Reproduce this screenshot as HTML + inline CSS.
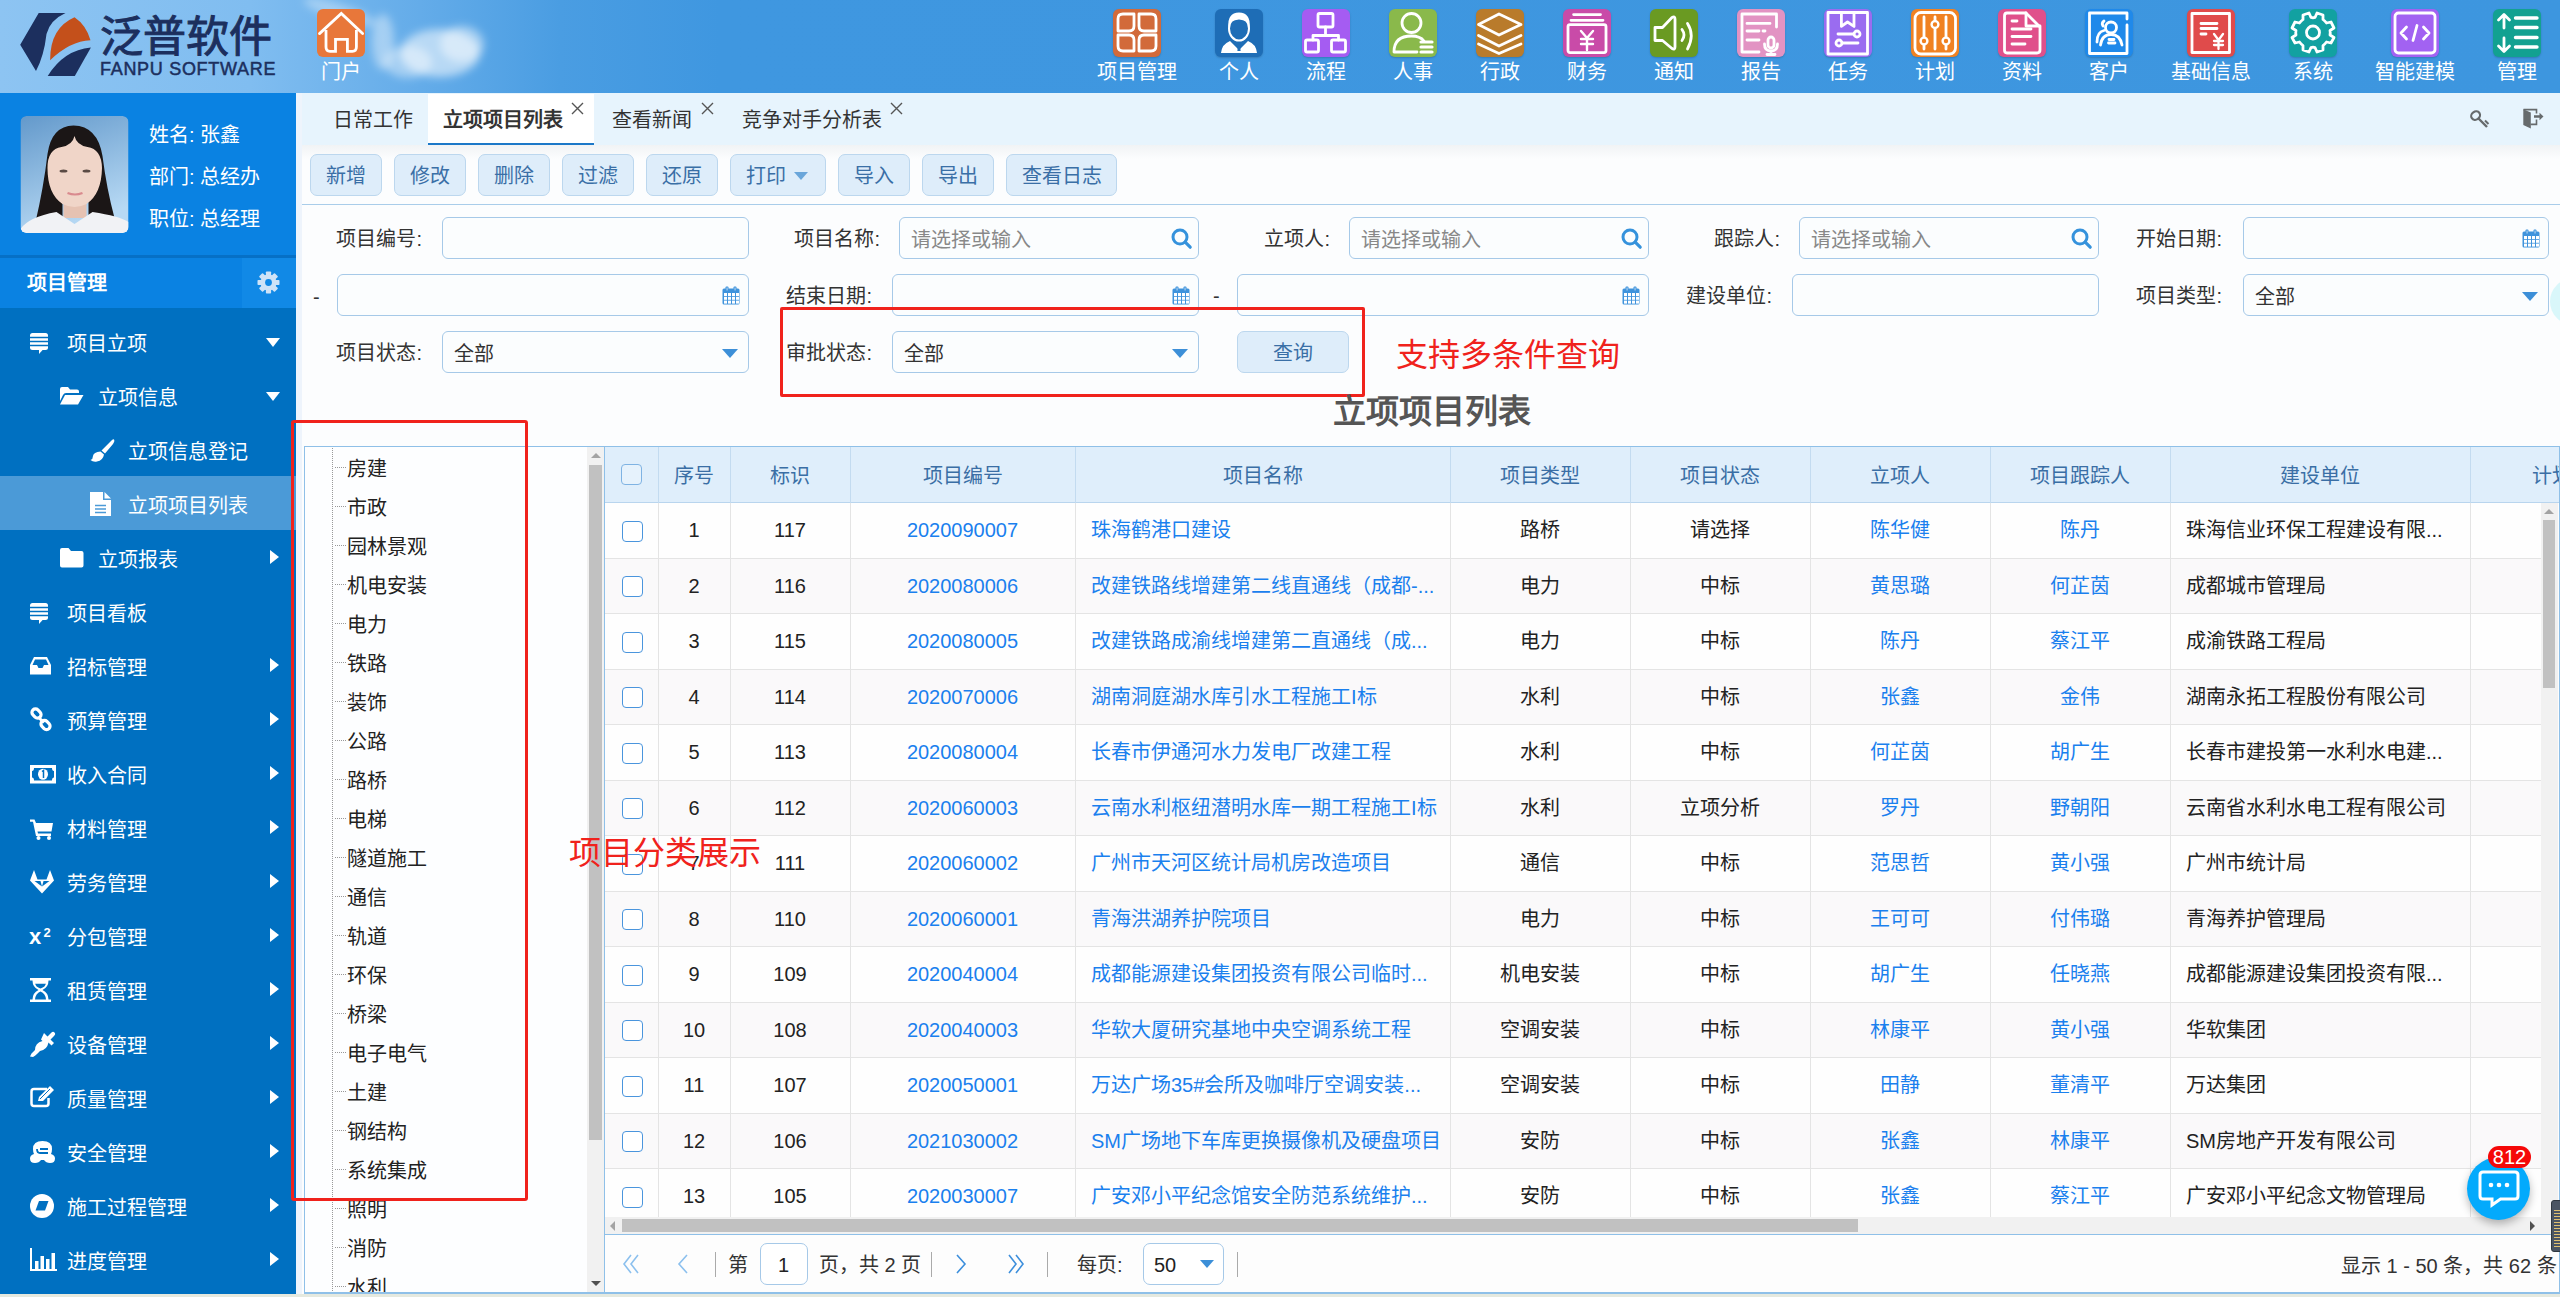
<!DOCTYPE html><html lang="zh-CN"><head><meta charset="utf-8"><style>
*{box-sizing:border-box;margin:0;padding:0}
html,body{width:2560px;height:1297px;overflow:hidden;background:#fcfdfe;font-family:"Liberation Sans",sans-serif;color:#333}
.abs{position:absolute}
.t{position:absolute;white-space:nowrap;line-height:1}
#hdr{position:absolute;left:0;top:0;width:2560px;height:93px;background:linear-gradient(90deg,#8dc4f2 0px,#80bdf0 250px,#64ace9 420px,#4a9de2 560px,#3f97e0 720px,#3d96df 2560px)}
.hi{position:absolute;top:9px;width:48px;height:48px;border-radius:6px}
.hl{position:absolute;top:62px;font-size:20px;color:#fff;white-space:nowrap;line-height:20px;text-align:center}
#side{position:absolute;left:0;top:93px;width:296px;height:1204px;background:#0070c1}
.mi{position:absolute;left:0;width:296px;height:54px;color:#fff;font-size:20px}
.mi .tx{position:absolute;top:19px;line-height:20px;white-space:nowrap}
.mi .ar{position:absolute;left:270px;top:20px;width:0;height:0;border-top:7px solid transparent;border-bottom:7px solid transparent;border-left:9px solid #fff}
.mi .ad{position:absolute;left:266px;top:24px;width:0;height:0;border-left:7px solid transparent;border-right:7px solid transparent;border-top:9px solid #fff}
.mi svg{position:absolute;overflow:visible}
.btn{position:absolute;top:154px;height:42px;border:1px solid #bcd7ee;border-radius:7px;background:#deedfa;color:#3a6fa6;font-size:20px;line-height:40px;text-align:center}
.lbl{position:absolute;font-size:20px;color:#333;white-space:nowrap;line-height:20px}
.inp{position:absolute;height:42px;border:1px solid #a6c9e8;border-radius:6px;background:#fbfdfe}
.ph{position:absolute;left:11px;top:11px;font-size:20px;line-height:20px;color:#888;white-space:nowrap}
.val{position:absolute;left:11px;top:11px;font-size:20px;line-height:20px;color:#333;white-space:nowrap}
.dd{position:absolute;right:10px;top:17px;width:0;height:0;border-left:8px solid transparent;border-right:8px solid transparent;border-top:9px solid #3c8fd8}
.tree .it{position:absolute;left:347px;font-size:20px;line-height:20px;color:#222;white-space:nowrap}
.tree .hd{position:absolute;left:335px;width:12px;height:1px;background:repeating-linear-gradient(90deg,#999 0 1px,transparent 1px 2px)}
.gh{position:absolute;top:447px;height:56px;font-size:20px;line-height:56px;color:#3a6ea5;text-align:center;white-space:nowrap}
.cell{position:absolute;font-size:20px;line-height:20px;white-space:nowrap;text-align:center}
.lnk{color:#1a80ee}
.t,.lbl,.ph,.val,.tree .it,.mi .tx,.gh{transform:translateY(1px)}
.btn{padding-top:1px}
.cb{position:absolute;width:21px;height:21px;border:1.6px solid #4a95dd;border-radius:4px;background:#fff}
.vl{position:absolute;width:1px;background:#e3e3e3}
.hlz{position:absolute;height:1px;background:#e3e3e3}
</style></head><body>
<div id="hdr">
<svg class="abs" style="left:280px;top:0" width="230" height="93" viewBox="280 0 230 93"><defs><filter id="bl" x="-50%" y="-50%" width="200%" height="200%"><feGaussianBlur stdDeviation="4"/></filter></defs>
<g filter="url(#bl)" fill="#fff">
<ellipse cx="440" cy="53" rx="40" ry="24" opacity=".55"/>
<ellipse cx="462" cy="44" rx="22" ry="18" opacity=".45"/>
<ellipse cx="408" cy="62" rx="24" ry="16" opacity=".4"/>
<ellipse cx="383" cy="42" rx="11" ry="28" opacity=".4"/>
<ellipse cx="340" cy="12" rx="38" ry="8" opacity=".35" transform="rotate(18 340 12)"/>
</g></svg>
<svg class="abs" style="left:0;top:0" width="100" height="90" viewBox="0 0 100 90">
<path d="M38.7 13 L65.5 13 Q50 20 46.5 34 Q44 56 36 71 L20.2 44.8 Z" fill="#1c2f5e"/>
<path d="M74.5 17.3 Q86 25 90.5 40.2 Q70 41 50.1 60.2 Q50 28 74.5 17.3 Z" fill="#c4501b"/>
<path d="M90.9 47.6 L74.8 76 L47.7 76 Q64 50 90.9 47.6 Z" fill="#1c2f5e"/>
</svg>
<div class="t" style="left:100px;top:14.5px;font-size:43px;font-weight:normal;color:#1c2f5e;-webkit-text-stroke:1px #1c2f5e">泛普软件</div>
<div class="t" style="left:100px;top:59px;font-size:18px;font-weight:normal;color:#1c2f5e;letter-spacing:0.7px;-webkit-text-stroke:0.5px #1c2f5e">FANPU SOFTWARE</div>
<div class="hi" style="left:317px;background:#e8773a"></div>
<svg class="abs" style="left:317px;top:9px" width="48" height="47" viewBox="0 0 48 47"><path d="M2.5 24.6L24.3 4.5L45.6 24.6" fill="none" stroke="#fff" stroke-width="2.8" stroke-linecap="round"/><path d="M9 21V38Q9 42.3 13 42.3H18.5V30.4H30.4V42.3H35.4Q39.4 42.3 39.4 38V21" fill="none" stroke="#fff" stroke-width="2.8"/></svg>
<div class="hl" style="left:321px;width:40px">门户</div>
<div class="hi" style="left:1113px;background:#d26a3a;box-shadow:0 1px 2px rgba(0,0,0,.18)"></div>
<svg class="abs" style="left:1113px;top:9px" width="48" height="47" viewBox="0 0 48 47"><g fill="none" stroke="#fff" stroke-width="2.8" stroke-linecap="round" stroke-linejoin="round"><path d="M5 10Q5 5 10 5H21V17Q21 22 16 22H5Z"/><path d="M43 10Q43 5 38 5H26V17Q26 22 31 22H43Z" transform="translate(0 0)"/><path d="M5 37Q5 42 10 42H21V31Q21 26 16 26H5Z"/><path d="M43 37Q43 42 38 42H26V31Q26 26 31 26H43Z"/></g></svg>
<div class="hl" style="left:1097px;width:80px">项目管理</div>
<div class="hi" style="left:1215px;background:#1e6db6;box-shadow:0 1px 2px rgba(0,0,0,.18)"></div>
<svg class="abs" style="left:1215px;top:9px" width="48" height="47" viewBox="0 0 48 47"><path d="M13.5 18Q12 4 24 3.5Q36 4 34.5 18Q33 11 24 10.5Q15 11 13.5 18Z" fill="#fff"/><ellipse cx="24" cy="19.5" rx="10" ry="12" fill="none" stroke="#fff" stroke-width="2"/><path d="M6 44Q7 35 15 32L24 41L33 32Q41 35 42 44Z" fill="#fff"/><path d="M23.2 34H24.8L25.6 42H22.4Z" fill="#1e6db6"/></svg>
<div class="hl" style="left:1219px;width:40px">个人</div>
<div class="hi" style="left:1302px;background:#a55cf2;box-shadow:0 1px 2px rgba(0,0,0,.18)"></div>
<svg class="abs" style="left:1302px;top:9px" width="48" height="47" viewBox="0 0 48 47"><g fill="none" stroke="#fff" stroke-width="2.8" stroke-linecap="round" stroke-linejoin="round"><rect x="16" y="4.5" width="15" height="13.5" rx="1.5"/><path d="M23.5 18V26.5M11 31V26.5H36.5V31"/><rect x="3.5" y="31" width="13" height="12" rx="1.5"/><rect x="29.5" y="31" width="14" height="12" rx="1.5"/></g></svg>
<div class="hl" style="left:1306px;width:40px">流程</div>
<div class="hi" style="left:1389px;background:#8ab94b;box-shadow:0 1px 2px rgba(0,0,0,.18)"></div>
<svg class="abs" style="left:1389px;top:9px" width="48" height="47" viewBox="0 0 48 47"><g fill="none" stroke="#fff" stroke-width="2.8" stroke-linecap="round" stroke-linejoin="round"><circle cx="22.5" cy="14" r="9.5"/><path d="M5 43Q5 27 22.5 27Q31 27 35 32M5 43H28"/><path d="M32 33H43M32 38H43M32 43H43" stroke-width="3.2"/></g></svg>
<div class="hl" style="left:1393px;width:40px">人事</div>
<div class="hi" style="left:1476px;background:#b97b2b;box-shadow:0 1px 2px rgba(0,0,0,.18)"></div>
<svg class="abs" style="left:1476px;top:9px" width="48" height="47" viewBox="0 0 48 47"><g fill="none" stroke="#fff" stroke-width="2.8" stroke-linecap="round" stroke-linejoin="round" stroke-width="2.4"><path d="M2.5 15.6L23 5L45 15.6L23 26Z"/><path d="M2.5 26.5L23 37L45 26.5"/><path d="M2.5 35L23 44.5L45 35"/></g></svg>
<div class="hl" style="left:1480px;width:40px">行政</div>
<div class="hi" style="left:1563px;background:#c94ba8;box-shadow:0 1px 2px rgba(0,0,0,.18)"></div>
<svg class="abs" style="left:1563px;top:9px" width="48" height="47" viewBox="0 0 48 47"><g fill="none" stroke="#fff" stroke-width="2.8" stroke-linecap="round" stroke-linejoin="round"><path d="M10.6 5.6H37.5M8 11.3H40"/><rect x="5" y="15.6" width="38" height="28" rx="2"/><path d="M18 22L24 29L30 22M24 29V41M18 30H30M18 35H30" stroke-width="2.4"/></g></svg>
<div class="hl" style="left:1567px;width:40px">财务</div>
<div class="hi" style="left:1650px;background:#6a9a22;box-shadow:0 1px 2px rgba(0,0,0,.18)"></div>
<svg class="abs" style="left:1650px;top:9px" width="48" height="47" viewBox="0 0 48 47"><g fill="none" stroke="#fff" stroke-width="2.8" stroke-linecap="round" stroke-linejoin="round"><path d="M5 18.5H12.5L22 8.5Q25 7 25 10V38Q25 41 22 39.5L12.5 31.5H5Z"/><path d="M32 20.5Q36 26 32 31.5M37.5 14.5Q45 26 37.5 40"/></g></svg>
<div class="hl" style="left:1654px;width:40px">通知</div>
<div class="hi" style="left:1737px;background:#e293c3;box-shadow:0 1px 2px rgba(0,0,0,.18)"></div>
<svg class="abs" style="left:1737px;top:9px" width="48" height="47" viewBox="0 0 48 47"><g fill="none" stroke="#fff" stroke-width="2.8" stroke-linecap="round" stroke-linejoin="round"><path d="M39.5 18V5H5V43H22"/><path d="M10 14.4H33M10 22H22M26 22H28M10 31H22"/><rect x="31" y="28" width="6" height="11" rx="3"/><path d="M27.5 35Q27.5 42 34 42Q40.5 42 40.5 35M34 42V45.5M30 45.5H38"/></g></svg>
<div class="hl" style="left:1741px;width:40px">报告</div>
<div class="hi" style="left:1824px;background:#9a6cf0;box-shadow:0 1px 2px rgba(0,0,0,.18)"></div>
<svg class="abs" style="left:1824px;top:9px" width="48" height="47" viewBox="0 0 48 47"><g fill="none" stroke="#fff" stroke-width="2.8" stroke-linecap="round" stroke-linejoin="round"><rect x="4" y="3.5" width="39.5" height="41.5"/><path d="M17.4 4V17.4L23.5 13L30 17.4V4"/><path d="M14 25H30M18 34H34"/><circle cx="33" cy="25" r="3"/><circle cx="15" cy="34" r="3"/></g></svg>
<div class="hl" style="left:1828px;width:40px">任务</div>
<div class="hi" style="left:1911px;background:#f08222;box-shadow:0 1px 2px rgba(0,0,0,.18)"></div>
<svg class="abs" style="left:1911px;top:9px" width="48" height="47" viewBox="0 0 48 47"><g fill="none" stroke="#fff" stroke-width="2.8" stroke-linecap="round"><rect x="4" y="3.5" width="40.5" height="41.5" rx="6"/><path d="M13 8V40M24 8V40M35 8V40"/></g><g fill="#f08222" stroke="#fff" stroke-width="2.4"><circle cx="13" cy="32" r="3.4"/><circle cx="24" cy="15.5" r="3.4"/><circle cx="35" cy="32" r="3.4"/></g></svg>
<div class="hl" style="left:1915px;width:40px">计划</div>
<div class="hi" style="left:1998px;background:#e0508b;box-shadow:0 1px 2px rgba(0,0,0,.18)"></div>
<svg class="abs" style="left:1998px;top:9px" width="48" height="47" viewBox="0 0 48 47"><g fill="none" stroke="#fff" stroke-width="2.8" stroke-linecap="round" stroke-linejoin="round"><path d="M9 4H28L42 18V41Q42 44 39 44H9Q6.5 44 6.5 41V7Q6.5 4 9 4Z"/><path d="M28 4V17H42"/><path d="M14 12H19M14 20H33M14 27.5H33M14 35H27"/></g></svg>
<div class="hl" style="left:2002px;width:40px">资料</div>
<div class="hi" style="left:2085px;background:#1f89ea;box-shadow:0 1px 2px rgba(0,0,0,.18)"></div>
<svg class="abs" style="left:2085px;top:9px" width="48" height="47" viewBox="0 0 48 47"><g fill="none" stroke="#fff" stroke-width="2.8" stroke-linecap="round" stroke-linejoin="round"><path d="M42 10V4H4.5V44.5H42V16"/><circle cx="26" cy="18.5" r="5.5"/><path d="M15.5 36Q17 25.5 26 25.5Q35 25.5 37 36M12 33Q12 23 19 21.5M18 17Q16 14 19 12M24 30.5H29M23.5 34H30"/></g></svg>
<div class="hl" style="left:2089px;width:40px">客户</div>
<div class="hi" style="left:2187px;background:#e04b4b;box-shadow:0 1px 2px rgba(0,0,0,.18)"></div>
<svg class="abs" style="left:2187px;top:9px" width="48" height="47" viewBox="0 0 48 47"><g fill="none" stroke="#fff" stroke-width="2.8" stroke-linecap="round" stroke-linejoin="round"><rect x="5" y="4.5" width="37.5" height="39"/><path d="M14 14.5H30M14 19.5H30M14 25H19"/><path d="M27 25L31.5 31L36 25M31.5 31V40M27 32H36M27 36H36" stroke-width="2.3"/></g></svg>
<div class="hl" style="left:2171px;width:80px">基础信息</div>
<div class="hi" style="left:2289px;background:#12a1a1;box-shadow:0 1px 2px rgba(0,0,0,.18)"></div>
<svg class="abs" style="left:2289px;top:9px" width="48" height="47" viewBox="0 0 48 47"><g fill="none" stroke="#fff" stroke-width="2.8" stroke-linecap="round" stroke-linejoin="round" stroke-width="2.6"><path d="M20 4L22 8.5Q24 9 26 8.5L28 4L34 6L34 10.5Q36 12 37.5 14L42 13L45 19L41 21.5Q41.5 23.5 41 26L45 28.5L42 34L37.5 33Q36 35 34 36.5L34 41L28 43L26 38.5Q24 38 22 38.5L20 43L14 41L14 36.5Q12 35 10.5 33L6 34L3 28.5L7 26Q6.5 23.5 7 21.5L3 19L6 13L10.5 14Q12 12 14 10.5L14 6Z"/><circle cx="24" cy="23.5" r="6.5"/></g></svg>
<div class="hl" style="left:2293px;width:40px">系统</div>
<div class="hi" style="left:2391px;background:#a262f2;box-shadow:0 1px 2px rgba(0,0,0,.18)"></div>
<svg class="abs" style="left:2391px;top:9px" width="48" height="47" viewBox="0 0 48 47"><g fill="none" stroke="#fff" stroke-width="2.8" stroke-linecap="round" stroke-linejoin="round"><rect x="4" y="4" width="40" height="40" rx="3.5"/><path d="M15.5 18L10 24L15.5 30M32.5 18L38 24L32.5 30M26 16.5L22 31.5"/></g></svg>
<div class="hl" style="left:2375px;width:80px">智能建模</div>
<div class="hi" style="left:2493px;background:#12a191;box-shadow:0 1px 2px rgba(0,0,0,.18)"></div>
<svg class="abs" style="left:2493px;top:9px" width="48" height="47" viewBox="0 0 48 47"><g fill="none" stroke="#fff" stroke-width="2.8" stroke-linecap="round" stroke-linejoin="round" stroke-width="3"><path d="M11 19V6M5.5 11L11 5.5L16.5 11M11 29V42M5.5 37L11 42.5L16.5 37"/><path d="M22.5 9H44M22.5 18.5H44M22.5 28.5H44M22.5 38H44" stroke-width="3.4"/></g></svg>
<div class="hl" style="left:2497px;width:40px">管理</div>
</div>
<div id="side">
<div class="abs" style="left:0;top:0;width:296px;height:162px;background:#0a82e2"></div>
<div class="abs" style="left:0;top:162px;width:296px;height:3px;background:#0670c6"></div>
<div class="abs" style="left:0;top:165px;width:296px;height:50px;background:#0a82e2"></div>
<div class="abs" style="left:242px;top:165px;width:54px;height:50px;background:#1189e6"></div>
<svg class="abs" style="left:20px;top:23px;border-radius:6px" width="109" height="117" viewBox="0 0 108 117">
<defs><linearGradient id="pbg" x1="0" y1="0" x2="0.35" y2="1"><stop offset="0" stop-color="#6399cb"/><stop offset="1" stop-color="#b7d9f4"/></linearGradient>
<clipPath id="pc"><rect width="108" height="117" rx="6"/></clipPath></defs>
<g clip-path="url(#pc)">
<rect width="108" height="117" fill="url(#pbg)"/>
<path d="M53 9.5Q31 10 27 38Q23 72 15 106H42V62H68V102H94Q86 72 82 40Q77 10 53 9.5Z" fill="#1b1616"/>
<rect x="43" y="78" width="23" height="24" fill="#e6c2b2"/>
<path d="M27 52Q27 33 41 31Q52 29 54 20Q56 29 67 31Q81 33 81.5 52Q81 78 66 88Q54 94 42 88Q27 78 27 52Z" fill="#f0d5c8"/>
<ellipse cx="43" cy="55" rx="4" ry="1.6" fill="#5a4a44"/><ellipse cx="66" cy="55" rx="4" ry="1.6" fill="#5a4a44"/>
<path d="M47 77Q54.5 80 62 77" stroke="#d98a8e" stroke-width="2.2" fill="none"/>
<path d="M0 113Q8 101 36 96L54 108L72 96Q99 100 108 106V117H0Z" fill="#f1f2f5"/>
</g></svg>
<div class="t" style="left:149px;top:31px;font-size:20px;color:#fff">姓名: 张鑫</div>
<div class="t" style="left:149px;top:73px;font-size:20px;color:#fff">部门: 总经办</div>
<div class="t" style="left:149px;top:115px;font-size:20px;color:#fff">职位: 总经理</div>
<div class="t" style="left:27px;top:179px;font-size:20px;color:#fff;font-weight:bold">项目管理</div>
<svg class="abs" style="left:257px;top:178px" width="23" height="23" viewBox="-11.5 -11.5 23 23"><g fill="#cfe3f7"><rect x="-2.6" y="-11" width="5.2" height="5" rx="0.8" transform="rotate(0)"/><rect x="-2.6" y="-11" width="5.2" height="5" rx="0.8" transform="rotate(45)"/><rect x="-2.6" y="-11" width="5.2" height="5" rx="0.8" transform="rotate(90)"/><rect x="-2.6" y="-11" width="5.2" height="5" rx="0.8" transform="rotate(135)"/><rect x="-2.6" y="-11" width="5.2" height="5" rx="0.8" transform="rotate(180)"/><rect x="-2.6" y="-11" width="5.2" height="5" rx="0.8" transform="rotate(225)"/><rect x="-2.6" y="-11" width="5.2" height="5" rx="0.8" transform="rotate(270)"/><rect x="-2.6" y="-11" width="5.2" height="5" rx="0.8" transform="rotate(315)"/><circle r="8"/></g><circle r="3.4" fill="#1189e6"/></svg>
</div>
<div class="mi" style="top:314px;"><div class="tx" style="left:67px">项目立项</div>
<svg style="left:30px;top:19px" width="18" height="21" viewBox="0 0 18 21"><rect x="0" y="0" width="18" height="17" rx="2.5" fill="#fff"/><path d="M0 4.5H18M0 8.5H18M0 12.5H18" stroke="#0070c1" stroke-width="1.3"/><path d="M9 16.5L9 21L13 16.5Z" fill="#fff"/></svg>
<div class="ad"></div>
</div>
<div class="mi" style="top:368px;"><div class="tx" style="left:98px">立项信息</div>
<svg style="left:60px;top:19px" width="24" height="18" viewBox="0 0 24 18"><path d="M0 2Q0 0 2 0H8L10 2.5H17Q19 2.5 19 4.5V6H6Q4 6 3 8L0 14Z" fill="#fff"/><path d="M5 8H23.5L18 17.5H0Z" fill="#fff"/></svg>
<div class="ad"></div>
</div>
<div class="mi" style="top:422px;"><div class="tx" style="left:128px">立项信息登记</div>
<svg style="left:90px;top:16px" width="25" height="25" viewBox="0 0 25 25"><path d="M24 1.5Q25 3 23 6L15 15.5L11.5 12.5L21 3Q23 0.5 24 1.5Z" fill="#fff"/><path d="M10.5 13.5L14 16.5Q13 22.5 7 23.5Q3 24.2 0.5 22Q3 21 3 18Q3.5 14 10.5 13.5Z" fill="#fff"/></svg>
</div>
<div class="mi" style="top:476px;background:#4b9ad7;"><div class="tx" style="left:128px">立项项目列表</div>
<svg style="left:90px;top:16px" width="22" height="25" viewBox="0 0 22 25"><path d="M0 0H13V8H21V24H0Z" fill="#fff"/><path d="M14.5 0L21 6.5H14.5Z" fill="#fff"/><path d="M5 13.5H16M5 17H16M5 20.5H16" stroke="#4b9ad7" stroke-width="1.4"/></svg>
</div>
<div class="mi" style="top:530px;"><div class="tx" style="left:98px">立项报表</div>
<svg style="left:60px;top:18px" width="24" height="20" viewBox="0 0 24 20"><path d="M0 2Q0 0 2 0H8.5L11 3H21.5Q23.5 3 23.5 5V17.5Q23.5 19.5 21.5 19.5H2Q0 19.5 0 17.5Z" fill="#fff"/></svg>
<div class="ar"></div>
</div>
<div class="mi" style="top:584px;"><div class="tx" style="left:67px">项目看板</div>
<svg style="left:30px;top:19px" width="18" height="21" viewBox="0 0 18 21"><rect x="0" y="0" width="18" height="17" rx="2.5" fill="#fff"/><path d="M0 4.5H18M0 8.5H18M0 12.5H18" stroke="#0070c1" stroke-width="1.3"/><path d="M9 16.5L9 21L13 16.5Z" fill="#fff"/></svg>
</div>
<div class="mi" style="top:638px;"><div class="tx" style="left:67px">招标管理</div>
<svg style="left:30px;top:19px" width="22" height="18" viewBox="0 0 22 18"><path d="M4 0H17L21 8V17.5H0V8Z" fill="#fff"/><path d="M5 2.5H16L18.5 8H14L12.5 11H8.5L7 8H2.5Z" fill="#0070c1"/></svg>
<div class="ar"></div>
</div>
<div class="mi" style="top:692px;"><div class="tx" style="left:67px">预算管理</div>
<svg style="left:30px;top:16px" width="22" height="23" viewBox="0 0 22 23"><g fill="none" stroke="#fff" stroke-width="3.2"><rect x="1.5" y="2" width="10" height="7" rx="3.5" transform="rotate(45 6.5 5.5)"/><rect x="10.5" y="13.5" width="10" height="7" rx="3.5" transform="rotate(45 15.5 17)"/></g><path d="M8 9L14 14.5" stroke="#fff" stroke-width="3"/></svg>
<div class="ar"></div>
</div>
<div class="mi" style="top:746px;"><div class="tx" style="left:67px">收入合同</div>
<svg style="left:30px;top:19px" width="26" height="19" viewBox="0 0 26 19"><rect x="0" y="0" width="26" height="18.5" fill="#fff"/><path d="M4 3H22Q22 6 24 6V12.5Q22 12.5 22 15.5H4Q4 12.5 2 12.5V6Q4 6 4 3Z" fill="#0070c1"/><ellipse cx="13" cy="9.25" rx="5" ry="5.5" fill="#fff"/><path d="M12 6.5L13.5 5.5V13" stroke="#0070c1" stroke-width="1.5" fill="none"/></svg>
<div class="ar"></div>
</div>
<div class="mi" style="top:800px;"><div class="tx" style="left:67px">材料管理</div>
<svg style="left:30px;top:19px" width="24" height="21" viewBox="0 0 24 21"><path d="M0 0.5H4.5L6 4H23L21.5 12.5H7.5L8 14.5H21V17H6L3 2.8H0Z" fill="#fff"/><circle cx="8.5" cy="19" r="2" fill="#fff"/><circle cx="19" cy="19" r="2" fill="#fff"/></svg>
<div class="ar"></div>
</div>
<div class="mi" style="top:854px;"><div class="tx" style="left:67px">劳务管理</div>
<svg style="left:30px;top:16px" width="25" height="24" viewBox="0 0 25 24"><path d="M0 10.5L4 0L7.5 9.5H16.5L20 0L24 10.5L12 23.5Z" fill="#fff"/><path d="M4.5 11H10.5L12 16.5Z" fill="#0070c1"/><path d="M13.5 11H19.5L12 16.5Z" fill="#0070c1" transform="translate(0 0)"/></svg>
<div class="ar"></div>
</div>
<div class="mi" style="top:908px;"><div class="tx" style="left:67px">分包管理</div>
<svg style="left:29px;top:18px" width="24" height="19" viewBox="0 0 24 19"><text x="0" y="18" font-family="Liberation Sans" font-weight="bold" font-size="22" fill="#fff">x</text><text x="14.5" y="10.5" font-family="Liberation Sans" font-weight="bold" font-size="13" fill="#fff">2</text></svg>
<div class="ar"></div>
</div>
<div class="mi" style="top:962px;"><div class="tx" style="left:67px">租赁管理</div>
<svg style="left:30px;top:16px" width="21" height="24" viewBox="0 0 21 24"><path d="M0 0H21V2.5H18.5Q18.5 9 12.5 12Q18.5 15 18.5 21.5H21V24H0V21.5H2.5Q2.5 15 8.5 12Q2.5 9 2.5 2.5H0Z" fill="#fff"/><path d="M5 5H16Q15.5 9 10.5 10.5Q5.5 9 5 5ZM5 21.5Q5.5 15.5 10.5 13.5Q15.5 15.5 16 21.5Z" fill="#0070c1"/><path d="M5 5H16" stroke="#fff" stroke-width="1.5"/></svg>
<div class="ar"></div>
</div>
<div class="mi" style="top:1016px;"><div class="tx" style="left:67px">设备管理</div>
<svg style="left:30px;top:15px" width="25" height="26" viewBox="0 0 25 26"><path d="M14 2L17.5 5.5L21 2Q23 0 24.5 1.5Q26 3 24 5L20.5 8.5L24 12L21.5 14.5L18.5 11.5Q17 19 10 20L7 23Q5 25 3 26L0 25.5L1.5 22.5L5 19Q5 12 12.5 10L11 8.5Z" fill="#fff"/></svg>
<div class="ar"></div>
</div>
<div class="mi" style="top:1070px;"><div class="tx" style="left:67px">质量管理</div>
<svg style="left:30px;top:16px" width="25" height="21" viewBox="0 0 25 21"><path d="M17 3H4Q1.5 3 1.5 5.5V17.5Q1.5 20 4 20H16Q18.5 20 18.5 17.5V12" fill="none" stroke="#fff" stroke-width="2.5"/><path d="M8 15L9 11L20 0L24 4L13 15Z" fill="#fff"/><path d="M10 13L20 3" stroke="#0070c1" stroke-width="1"/></svg>
<div class="ar"></div>
</div>
<div class="mi" style="top:1124px;"><div class="tx" style="left:67px">安全管理</div>
<svg style="left:30px;top:17px" width="25" height="22" viewBox="0 0 25 22"><path d="M12.5 0Q22 0 22 8Q22 11 21 13Q25 14 25 17.5Q25 22 20 22Q16 22 14 19H11Q9 22 5 22Q0 22 0 17.5Q0 14 4 13Q3 11 3 8Q3 0 12.5 0Z" fill="#fff"/><path d="M7 8Q7 12 10 12H18M10 8H18" stroke="#0070c1" stroke-width="1.8" fill="none"/></svg>
<div class="ar"></div>
</div>
<div class="mi" style="top:1178px;"><div class="tx" style="left:67px">施工过程管理</div>
<svg style="left:30px;top:16px" width="24" height="24" viewBox="0 0 24 24"><circle cx="12" cy="12" r="12" fill="#fff"/><path d="M9 7H18.5L15 16.5H5.5Z" fill="#0070c1"/></svg>
<div class="ar"></div>
</div>
<div class="mi" style="top:1232px;"><div class="tx" style="left:67px">进度管理</div>
<svg style="left:30px;top:16px" width="27" height="23" viewBox="0 0 27 23"><path d="M1 0V22H27" fill="none" stroke="#fff" stroke-width="2"/><rect x="5" y="13" width="3.5" height="8" fill="#fff"/><rect x="10.5" y="8" width="3.5" height="13" fill="#fff"/><rect x="16" y="11" width="3.5" height="10" fill="#fff"/><rect x="21.5" y="5" width="3.5" height="16" fill="#fff"/></svg>
<div class="ar"></div>
</div>
<div class="abs" style="left:296px;top:93px;width:6px;height:1204px;background:#eef4fc"></div>
<div class="abs" style="left:302px;top:93px;width:2258px;height:52px;background:#e7f4fd"></div>
<div class="abs" style="left:428px;top:94px;width:166px;height:51px;background:#fff;border-bottom:2px solid #1c78c8"></div>
<div class="t" style="left:333px;top:109px;font-size:20px;color:#333">日常工作</div>
<div class="t" style="left:443px;top:109px;font-size:20px;color:#333;font-weight:bold">立项项目列表</div>
<div class="t" style="left:612px;top:109px;font-size:20px;color:#333">查看新闻</div>
<div class="t" style="left:742px;top:109px;font-size:20px;color:#333">竞争对手分析表</div>
<svg class="abs" style="left:571px;top:102px" width="13" height="13" viewBox="0 0 13 13"><path d="M1 1L12 12M12 1L1 12" stroke="#555" stroke-width="1.4"/></svg>
<svg class="abs" style="left:701px;top:102px" width="13" height="13" viewBox="0 0 13 13"><path d="M1 1L12 12M12 1L1 12" stroke="#555" stroke-width="1.4"/></svg>
<svg class="abs" style="left:890px;top:102px" width="13" height="13" viewBox="0 0 13 13"><path d="M1 1L12 12M12 1L1 12" stroke="#555" stroke-width="1.4"/></svg>
<svg class="abs" style="left:2465px;top:104px" width="30" height="30" viewBox="2465 104 30 30"><ellipse cx="2475.6" cy="115.6" rx="4.6" ry="4" transform="rotate(-35 2475.6 115.6)" fill="none" stroke="#666a6c" stroke-width="2.2"/><path d="M2478.5 118.5L2487 127" stroke="#666a6c" stroke-width="2.4"/><path d="M2485 120.5L2488.5 124" stroke="#666a6c" stroke-width="2"/></svg>
<svg class="abs" style="left:2520px;top:105px" width="28" height="28" viewBox="2520 105 28 28"><path d="M2523.5 109.6H2536.5V113.5M2536.5 119.5V124.4H2530.5" fill="none" stroke="#666a6c" stroke-width="1.6"/><path d="M2523.3 109.2L2530.8 112.5V128.6L2523.3 125Z" fill="#666a6c"/><path d="M2534 115.3H2539.5V112.8L2543.5 116.5L2539.5 120.2V117.7H2534Z" fill="#666a6c"/></svg>
<div class="abs" style="left:302px;top:145px;width:2258px;height:59px;background:linear-gradient(180deg,#f1f3f5 0,#fcfdfe 14px)"></div>
<div class="abs" style="left:302px;top:204px;width:2258px;height:1px;background:#a9cdea"></div>
<div class="btn" style="left:310px;width:72px">新增</div>
<div class="btn" style="left:394px;width:72px">修改</div>
<div class="btn" style="left:478px;width:72px">删除</div>
<div class="btn" style="left:562px;width:72px">过滤</div>
<div class="btn" style="left:646px;width:72px">还原</div>
<div class="btn" style="left:730px;width:96px;text-align:left;padding-left:15px">打印<span class="abs" style="left:63px;top:17px;border-left:7px solid transparent;border-right:7px solid transparent;border-top:8px solid #6aa6da"></span></div>
<div class="btn" style="left:838px;width:72px">导入</div>
<div class="btn" style="left:922px;width:72px">导出</div>
<div class="btn" style="left:1006px;width:111px">查看日志</div>
<div class="lbl" style="left:322px;width:100px;top:228px;text-align:right">项目编号:</div>
<div class="inp" style="left:442px;top:217px;width:307px"></div>
<div class="lbl" style="left:780px;width:100px;top:228px;text-align:right">项目名称:</div>
<div class="inp" style="left:899px;top:217px;width:300px"><div class="ph">请选择或输入</div><svg class="abs" style="right:5.5px;top:9.5px" width="22" height="22" viewBox="0 0 22 22"><circle cx="9" cy="9" r="7" fill="none" stroke="#3592dc" stroke-width="3"/><path d="M14.2 14.2L19.2 19.2" stroke="#3592dc" stroke-width="3.2" stroke-linecap="round"/></svg></div>
<div class="lbl" style="left:1250px;width:80px;top:228px;text-align:right">立项人:</div>
<div class="inp" style="left:1349px;top:217px;width:300px"><div class="ph">请选择或输入</div><svg class="abs" style="right:5.5px;top:9.5px" width="22" height="22" viewBox="0 0 22 22"><circle cx="9" cy="9" r="7" fill="none" stroke="#3592dc" stroke-width="3"/><path d="M14.2 14.2L19.2 19.2" stroke="#3592dc" stroke-width="3.2" stroke-linecap="round"/></svg></div>
<div class="lbl" style="left:1700px;width:80px;top:228px;text-align:right">跟踪人:</div>
<div class="inp" style="left:1799px;top:217px;width:300px"><div class="ph">请选择或输入</div><svg class="abs" style="right:5.5px;top:9.5px" width="22" height="22" viewBox="0 0 22 22"><circle cx="9" cy="9" r="7" fill="none" stroke="#3592dc" stroke-width="3"/><path d="M14.2 14.2L19.2 19.2" stroke="#3592dc" stroke-width="3.2" stroke-linecap="round"/></svg></div>
<div class="lbl" style="left:2122px;width:100px;top:228px;text-align:right">开始日期:</div>
<div class="inp" style="left:2243px;top:217px;width:306px"><svg class="abs" style="right:8px;top:11px" width="18" height="19" viewBox="0 0 18 19"><rect x="0.5" y="2.5" width="17" height="16" rx="1.5" fill="#3f93dc"/><rect x="2" y="7" width="3" height="3" fill="#fff"/><rect x="2" y="10.8" width="3" height="3" fill="#fff"/><rect x="2" y="14.6" width="3" height="3" fill="#fff"/><rect x="6" y="7" width="3" height="3" fill="#fff"/><rect x="6" y="10.8" width="3" height="3" fill="#fff"/><rect x="6" y="14.6" width="3" height="3" fill="#fff"/><rect x="10" y="7" width="3" height="3" fill="#fff"/><rect x="10" y="10.8" width="3" height="3" fill="#fff"/><rect x="10" y="14.6" width="3" height="3" fill="#fff"/><rect x="14" y="7" width="3" height="3" fill="#fff"/><rect x="14" y="10.8" width="3" height="3" fill="#fff"/><rect x="14" y="14.6" width="3" height="3" fill="#fff"/><rect x="3.5" y="0.5" width="3" height="5" rx="1" fill="#3f93dc"/><rect x="11.5" y="0.5" width="3" height="5" rx="1" fill="#3f93dc"/><rect x="4.6" y="1.5" width="0.9" height="3" fill="#cfe3f5"/><rect x="12.6" y="1.5" width="0.9" height="3" fill="#cfe3f5"/></svg></div>
<div class="t" style="left:313px;top:286px;font-size:20px">-</div>
<div class="inp" style="left:337px;top:274px;width:412px"><svg class="abs" style="right:8px;top:11px" width="18" height="19" viewBox="0 0 18 19"><rect x="0.5" y="2.5" width="17" height="16" rx="1.5" fill="#3f93dc"/><rect x="2" y="7" width="3" height="3" fill="#fff"/><rect x="2" y="10.8" width="3" height="3" fill="#fff"/><rect x="2" y="14.6" width="3" height="3" fill="#fff"/><rect x="6" y="7" width="3" height="3" fill="#fff"/><rect x="6" y="10.8" width="3" height="3" fill="#fff"/><rect x="6" y="14.6" width="3" height="3" fill="#fff"/><rect x="10" y="7" width="3" height="3" fill="#fff"/><rect x="10" y="10.8" width="3" height="3" fill="#fff"/><rect x="10" y="14.6" width="3" height="3" fill="#fff"/><rect x="14" y="7" width="3" height="3" fill="#fff"/><rect x="14" y="10.8" width="3" height="3" fill="#fff"/><rect x="14" y="14.6" width="3" height="3" fill="#fff"/><rect x="3.5" y="0.5" width="3" height="5" rx="1" fill="#3f93dc"/><rect x="11.5" y="0.5" width="3" height="5" rx="1" fill="#3f93dc"/><rect x="4.6" y="1.5" width="0.9" height="3" fill="#cfe3f5"/><rect x="12.6" y="1.5" width="0.9" height="3" fill="#cfe3f5"/></svg></div>
<div class="lbl" style="left:772px;width:100px;top:285px;text-align:right">结束日期:</div>
<div class="inp" style="left:892px;top:274px;width:307px"><svg class="abs" style="right:8px;top:11px" width="18" height="19" viewBox="0 0 18 19"><rect x="0.5" y="2.5" width="17" height="16" rx="1.5" fill="#3f93dc"/><rect x="2" y="7" width="3" height="3" fill="#fff"/><rect x="2" y="10.8" width="3" height="3" fill="#fff"/><rect x="2" y="14.6" width="3" height="3" fill="#fff"/><rect x="6" y="7" width="3" height="3" fill="#fff"/><rect x="6" y="10.8" width="3" height="3" fill="#fff"/><rect x="6" y="14.6" width="3" height="3" fill="#fff"/><rect x="10" y="7" width="3" height="3" fill="#fff"/><rect x="10" y="10.8" width="3" height="3" fill="#fff"/><rect x="10" y="14.6" width="3" height="3" fill="#fff"/><rect x="14" y="7" width="3" height="3" fill="#fff"/><rect x="14" y="10.8" width="3" height="3" fill="#fff"/><rect x="14" y="14.6" width="3" height="3" fill="#fff"/><rect x="3.5" y="0.5" width="3" height="5" rx="1" fill="#3f93dc"/><rect x="11.5" y="0.5" width="3" height="5" rx="1" fill="#3f93dc"/><rect x="4.6" y="1.5" width="0.9" height="3" fill="#cfe3f5"/><rect x="12.6" y="1.5" width="0.9" height="3" fill="#cfe3f5"/></svg></div>
<div class="t" style="left:1213px;top:285px;font-size:20px">-</div>
<div class="inp" style="left:1237px;top:274px;width:412px"><svg class="abs" style="right:8px;top:11px" width="18" height="19" viewBox="0 0 18 19"><rect x="0.5" y="2.5" width="17" height="16" rx="1.5" fill="#3f93dc"/><rect x="2" y="7" width="3" height="3" fill="#fff"/><rect x="2" y="10.8" width="3" height="3" fill="#fff"/><rect x="2" y="14.6" width="3" height="3" fill="#fff"/><rect x="6" y="7" width="3" height="3" fill="#fff"/><rect x="6" y="10.8" width="3" height="3" fill="#fff"/><rect x="6" y="14.6" width="3" height="3" fill="#fff"/><rect x="10" y="7" width="3" height="3" fill="#fff"/><rect x="10" y="10.8" width="3" height="3" fill="#fff"/><rect x="10" y="14.6" width="3" height="3" fill="#fff"/><rect x="14" y="7" width="3" height="3" fill="#fff"/><rect x="14" y="10.8" width="3" height="3" fill="#fff"/><rect x="14" y="14.6" width="3" height="3" fill="#fff"/><rect x="3.5" y="0.5" width="3" height="5" rx="1" fill="#3f93dc"/><rect x="11.5" y="0.5" width="3" height="5" rx="1" fill="#3f93dc"/><rect x="4.6" y="1.5" width="0.9" height="3" fill="#cfe3f5"/><rect x="12.6" y="1.5" width="0.9" height="3" fill="#cfe3f5"/></svg></div>
<div class="lbl" style="left:1672px;width:100px;top:285px;text-align:right">建设单位:</div>
<div class="inp" style="left:1792px;top:274px;width:307px"></div>
<div class="lbl" style="left:2122px;width:100px;top:285px;text-align:right">项目类型:</div>
<div class="inp" style="left:2243px;top:274px;width:306px"><div class="val">全部</div><div class="dd"></div></div>
<div class="lbl" style="left:322px;width:100px;top:342px;text-align:right">项目状态:</div>
<div class="inp" style="left:442px;top:331px;width:307px"><div class="val">全部</div><div class="dd"></div></div>
<div class="lbl" style="left:772px;width:100px;top:342px;text-align:right">审批状态:</div>
<div class="inp" style="left:892px;top:331px;width:307px"><div class="val">全部</div><div class="dd"></div></div>
<div class="btn" style="left:1237px;top:331px;width:112px;height:42px">查询</div>
<div class="abs" style="left:780px;top:307px;width:585px;height:90px;border:3px solid #f0221c;border-radius:2px"></div>
<div class="t" style="left:1396px;top:338px;font-size:32px;color:#f0221c">支持多条件查询</div>
<div class="t" style="left:1333px;top:394px;font-size:33px;color:#555;font-weight:bold">立项项目列表</div>
<div class="abs tree" style="left:304px;top:446px;width:300px;height:846px;border-left:1px solid #8fc0e8;border-top:1px solid #8fc0e8;background:#fdfeff">
</div>
<div class="abs" style="left:587px;top:447px;width:17px;height:845px;background:#f1f1f1"></div>
<div class="abs" style="left:589px;top:465px;width:13px;height:675px;background:#c1c1c1"></div>
<div class="abs" style="left:591px;top:453px;border-left:5px solid transparent;border-right:5px solid transparent;border-bottom:5px solid #a3a3a3"></div>
<div class="abs" style="left:591px;top:1281px;border-left:5px solid transparent;border-right:5px solid transparent;border-top:5px solid #505050"></div>
<div class="abs" style="left:332px;top:448px;width:1px;height:844px;background:repeating-linear-gradient(180deg,#999 0 1px,transparent 1px 2px)"></div>
<div class="tree">
<div class="hd" style="top:466.7px"></div><div class="it" style="top:457.7px">房建</div>
<div class="hd" style="top:505.7px"></div><div class="it" style="top:496.7px">市政</div>
<div class="hd" style="top:544.7px"></div><div class="it" style="top:535.7px">园林景观</div>
<div class="hd" style="top:583.7px"></div><div class="it" style="top:574.7px">机电安装</div>
<div class="hd" style="top:622.7px"></div><div class="it" style="top:613.7px">电力</div>
<div class="hd" style="top:661.7px"></div><div class="it" style="top:652.7px">铁路</div>
<div class="hd" style="top:700.7px"></div><div class="it" style="top:691.7px">装饰</div>
<div class="hd" style="top:739.7px"></div><div class="it" style="top:730.7px">公路</div>
<div class="hd" style="top:778.7px"></div><div class="it" style="top:769.7px">路桥</div>
<div class="hd" style="top:817.7px"></div><div class="it" style="top:808.7px">电梯</div>
<div class="hd" style="top:856.7px"></div><div class="it" style="top:847.7px">隧道施工</div>
<div class="hd" style="top:895.7px"></div><div class="it" style="top:886.7px">通信</div>
<div class="hd" style="top:934.7px"></div><div class="it" style="top:925.7px">轨道</div>
<div class="hd" style="top:973.7px"></div><div class="it" style="top:964.7px">环保</div>
<div class="hd" style="top:1012.7px"></div><div class="it" style="top:1003.7px">桥梁</div>
<div class="hd" style="top:1051.7px"></div><div class="it" style="top:1042.7px">电子电气</div>
<div class="hd" style="top:1090.7px"></div><div class="it" style="top:1081.7px">土建</div>
<div class="hd" style="top:1129.7px"></div><div class="it" style="top:1120.7px">钢结构</div>
<div class="hd" style="top:1168.7px"></div><div class="it" style="top:1159.7px">系统集成</div>
<div class="hd" style="top:1207.7px"></div><div class="it" style="top:1198.7px">照明</div>
<div class="hd" style="top:1246.7px"></div><div class="it" style="top:1237.7px">消防</div>
<div class="hd" style="top:1285.7px"></div><div class="it" style="top:1276.7px">水利</div>
</div>
<div class="abs" style="left:291px;top:420px;width:236.5px;height:781px;border:3px solid #f0221c;border-radius:3px"></div>
<div class="t" style="left:569px;top:836px;font-size:32px;color:#f0221c;z-index:5">项目分类展示</div>
<div class="abs" style="left:604px;top:446px;width:1956px;height:847px;border-left:1px solid #8fc0e8;border-top:1px solid #8fc0e8;background:#fdfdfd"></div>
<div class="abs" style="left:605px;top:447px;width:1955px;height:56px;background:#dfeefb;border-bottom:1px solid #b9d5ee"></div>
<div class="abs" style="left:658px;top:447px;width:1px;height:56px;background:#c3dbf0"></div>
<div class="gh" style="left:658px;width:72px">序号</div>
<div class="abs" style="left:730px;top:447px;width:1px;height:56px;background:#c3dbf0"></div>
<div class="gh" style="left:730px;width:120px">标识</div>
<div class="abs" style="left:850px;top:447px;width:1px;height:56px;background:#c3dbf0"></div>
<div class="gh" style="left:850px;width:225px">项目编号</div>
<div class="abs" style="left:1075px;top:447px;width:1px;height:56px;background:#c3dbf0"></div>
<div class="gh" style="left:1075px;width:375px">项目名称</div>
<div class="abs" style="left:1450px;top:447px;width:1px;height:56px;background:#c3dbf0"></div>
<div class="gh" style="left:1450px;width:180px">项目类型</div>
<div class="abs" style="left:1630px;top:447px;width:1px;height:56px;background:#c3dbf0"></div>
<div class="gh" style="left:1630px;width:180px">项目状态</div>
<div class="abs" style="left:1810px;top:447px;width:1px;height:56px;background:#c3dbf0"></div>
<div class="gh" style="left:1810px;width:180px">立项人</div>
<div class="abs" style="left:1990px;top:447px;width:1px;height:56px;background:#c3dbf0"></div>
<div class="gh" style="left:1990px;width:180px">项目跟踪人</div>
<div class="abs" style="left:2170px;top:447px;width:1px;height:56px;background:#c3dbf0"></div>
<div class="gh" style="left:2170px;width:300px">建设单位</div>
<div class="abs" style="left:2470px;top:447px;width:1px;height:56px;background:#c3dbf0"></div>
<div class="gh" style="left:2470px;width:203px">计划开始</div>
<div class="cb" style="left:621px;top:464px;border-color:#7fb3e3;background:#e6f2fc"></div>
<div class="abs" style="left:605px;top:503px;width:1936px;height:714px;overflow:hidden">
<div class="abs" style="left:0;top:0.0px;width:1936px;height:55.5px;background:#fefefe;border-bottom:1px solid #e4e4e4"></div>
<div class="cb" style="left:17px;top:17.5px"></div>
<div class="cell" style="left:53px;width:72px;top:17.0px;color:#222;">1</div>
<div class="cell" style="left:125px;width:120px;top:17.0px;color:#222;">117</div>
<div class="cell lnk" style="left:245px;width:225px;top:17.0px;">2020090007</div>
<div class="cell lnk" style="left:470px;width:375px;top:17.0px;text-align:left;padding-left:16px;">珠海鹤港口建设</div>
<div class="cell" style="left:845px;width:180px;top:17.0px;color:#222;">路桥</div>
<div class="cell" style="left:1025px;width:180px;top:17.0px;color:#222;">请选择</div>
<div class="cell lnk" style="left:1205px;width:180px;top:17.0px;">陈华健</div>
<div class="cell lnk" style="left:1385px;width:180px;top:17.0px;">陈丹</div>
<div class="cell" style="left:1565px;width:300px;top:17.0px;color:#222;text-align:left;padding-left:16px;">珠海信业环保工程建设有限...</div>
<div class="abs" style="left:0;top:55.5px;width:1936px;height:55.5px;background:#faf9fa;border-bottom:1px solid #e4e4e4"></div>
<div class="cb" style="left:17px;top:73.0px"></div>
<div class="cell" style="left:53px;width:72px;top:72.5px;color:#222;">2</div>
<div class="cell" style="left:125px;width:120px;top:72.5px;color:#222;">116</div>
<div class="cell lnk" style="left:245px;width:225px;top:72.5px;">2020080006</div>
<div class="cell lnk" style="left:470px;width:375px;top:72.5px;text-align:left;padding-left:16px;">改建铁路线增建第二线直通线（成都-...</div>
<div class="cell" style="left:845px;width:180px;top:72.5px;color:#222;">电力</div>
<div class="cell" style="left:1025px;width:180px;top:72.5px;color:#222;">中标</div>
<div class="cell lnk" style="left:1205px;width:180px;top:72.5px;">黄思璐</div>
<div class="cell lnk" style="left:1385px;width:180px;top:72.5px;">何芷茵</div>
<div class="cell" style="left:1565px;width:300px;top:72.5px;color:#222;text-align:left;padding-left:16px;">成都城市管理局</div>
<div class="abs" style="left:0;top:111.0px;width:1936px;height:55.5px;background:#fefefe;border-bottom:1px solid #e4e4e4"></div>
<div class="cb" style="left:17px;top:128.5px"></div>
<div class="cell" style="left:53px;width:72px;top:128.0px;color:#222;">3</div>
<div class="cell" style="left:125px;width:120px;top:128.0px;color:#222;">115</div>
<div class="cell lnk" style="left:245px;width:225px;top:128.0px;">2020080005</div>
<div class="cell lnk" style="left:470px;width:375px;top:128.0px;text-align:left;padding-left:16px;">改建铁路成渝线增建第二直通线（成...</div>
<div class="cell" style="left:845px;width:180px;top:128.0px;color:#222;">电力</div>
<div class="cell" style="left:1025px;width:180px;top:128.0px;color:#222;">中标</div>
<div class="cell lnk" style="left:1205px;width:180px;top:128.0px;">陈丹</div>
<div class="cell lnk" style="left:1385px;width:180px;top:128.0px;">蔡江平</div>
<div class="cell" style="left:1565px;width:300px;top:128.0px;color:#222;text-align:left;padding-left:16px;">成渝铁路工程局</div>
<div class="abs" style="left:0;top:166.5px;width:1936px;height:55.5px;background:#faf9fa;border-bottom:1px solid #e4e4e4"></div>
<div class="cb" style="left:17px;top:184.0px"></div>
<div class="cell" style="left:53px;width:72px;top:183.5px;color:#222;">4</div>
<div class="cell" style="left:125px;width:120px;top:183.5px;color:#222;">114</div>
<div class="cell lnk" style="left:245px;width:225px;top:183.5px;">2020070006</div>
<div class="cell lnk" style="left:470px;width:375px;top:183.5px;text-align:left;padding-left:16px;">湖南洞庭湖水库引水工程施工I标</div>
<div class="cell" style="left:845px;width:180px;top:183.5px;color:#222;">水利</div>
<div class="cell" style="left:1025px;width:180px;top:183.5px;color:#222;">中标</div>
<div class="cell lnk" style="left:1205px;width:180px;top:183.5px;">张鑫</div>
<div class="cell lnk" style="left:1385px;width:180px;top:183.5px;">金伟</div>
<div class="cell" style="left:1565px;width:300px;top:183.5px;color:#222;text-align:left;padding-left:16px;">湖南永拓工程股份有限公司</div>
<div class="abs" style="left:0;top:222.0px;width:1936px;height:55.5px;background:#fefefe;border-bottom:1px solid #e4e4e4"></div>
<div class="cb" style="left:17px;top:239.5px"></div>
<div class="cell" style="left:53px;width:72px;top:239.0px;color:#222;">5</div>
<div class="cell" style="left:125px;width:120px;top:239.0px;color:#222;">113</div>
<div class="cell lnk" style="left:245px;width:225px;top:239.0px;">2020080004</div>
<div class="cell lnk" style="left:470px;width:375px;top:239.0px;text-align:left;padding-left:16px;">长春市伊通河水力发电厂改建工程</div>
<div class="cell" style="left:845px;width:180px;top:239.0px;color:#222;">水利</div>
<div class="cell" style="left:1025px;width:180px;top:239.0px;color:#222;">中标</div>
<div class="cell lnk" style="left:1205px;width:180px;top:239.0px;">何芷茵</div>
<div class="cell lnk" style="left:1385px;width:180px;top:239.0px;">胡广生</div>
<div class="cell" style="left:1565px;width:300px;top:239.0px;color:#222;text-align:left;padding-left:16px;">长春市建投第一水利水电建...</div>
<div class="abs" style="left:0;top:277.5px;width:1936px;height:55.5px;background:#faf9fa;border-bottom:1px solid #e4e4e4"></div>
<div class="cb" style="left:17px;top:295.0px"></div>
<div class="cell" style="left:53px;width:72px;top:294.5px;color:#222;">6</div>
<div class="cell" style="left:125px;width:120px;top:294.5px;color:#222;">112</div>
<div class="cell lnk" style="left:245px;width:225px;top:294.5px;">2020060003</div>
<div class="cell lnk" style="left:470px;width:375px;top:294.5px;text-align:left;padding-left:16px;">云南水利枢纽潜明水库一期工程施工I标</div>
<div class="cell" style="left:845px;width:180px;top:294.5px;color:#222;">水利</div>
<div class="cell" style="left:1025px;width:180px;top:294.5px;color:#222;">立项分析</div>
<div class="cell lnk" style="left:1205px;width:180px;top:294.5px;">罗丹</div>
<div class="cell lnk" style="left:1385px;width:180px;top:294.5px;">野朝阳</div>
<div class="cell" style="left:1565px;width:300px;top:294.5px;color:#222;text-align:left;padding-left:16px;">云南省水利水电工程有限公司</div>
<div class="abs" style="left:0;top:333.0px;width:1936px;height:55.5px;background:#fefefe;border-bottom:1px solid #e4e4e4"></div>
<div class="cb" style="left:17px;top:350.5px"></div>
<div class="cell" style="left:53px;width:72px;top:350.0px;color:#222;">7</div>
<div class="cell" style="left:125px;width:120px;top:350.0px;color:#222;">111</div>
<div class="cell lnk" style="left:245px;width:225px;top:350.0px;">2020060002</div>
<div class="cell lnk" style="left:470px;width:375px;top:350.0px;text-align:left;padding-left:16px;">广州市天河区统计局机房改造项目</div>
<div class="cell" style="left:845px;width:180px;top:350.0px;color:#222;">通信</div>
<div class="cell" style="left:1025px;width:180px;top:350.0px;color:#222;">中标</div>
<div class="cell lnk" style="left:1205px;width:180px;top:350.0px;">范思哲</div>
<div class="cell lnk" style="left:1385px;width:180px;top:350.0px;">黄小强</div>
<div class="cell" style="left:1565px;width:300px;top:350.0px;color:#222;text-align:left;padding-left:16px;">广州市统计局</div>
<div class="abs" style="left:0;top:388.5px;width:1936px;height:55.5px;background:#faf9fa;border-bottom:1px solid #e4e4e4"></div>
<div class="cb" style="left:17px;top:406.0px"></div>
<div class="cell" style="left:53px;width:72px;top:405.5px;color:#222;">8</div>
<div class="cell" style="left:125px;width:120px;top:405.5px;color:#222;">110</div>
<div class="cell lnk" style="left:245px;width:225px;top:405.5px;">2020060001</div>
<div class="cell lnk" style="left:470px;width:375px;top:405.5px;text-align:left;padding-left:16px;">青海洪湖养护院项目</div>
<div class="cell" style="left:845px;width:180px;top:405.5px;color:#222;">电力</div>
<div class="cell" style="left:1025px;width:180px;top:405.5px;color:#222;">中标</div>
<div class="cell lnk" style="left:1205px;width:180px;top:405.5px;">王可可</div>
<div class="cell lnk" style="left:1385px;width:180px;top:405.5px;">付伟璐</div>
<div class="cell" style="left:1565px;width:300px;top:405.5px;color:#222;text-align:left;padding-left:16px;">青海养护管理局</div>
<div class="abs" style="left:0;top:444.0px;width:1936px;height:55.5px;background:#fefefe;border-bottom:1px solid #e4e4e4"></div>
<div class="cb" style="left:17px;top:461.5px"></div>
<div class="cell" style="left:53px;width:72px;top:461.0px;color:#222;">9</div>
<div class="cell" style="left:125px;width:120px;top:461.0px;color:#222;">109</div>
<div class="cell lnk" style="left:245px;width:225px;top:461.0px;">2020040004</div>
<div class="cell lnk" style="left:470px;width:375px;top:461.0px;text-align:left;padding-left:16px;">成都能源建设集团投资有限公司临时...</div>
<div class="cell" style="left:845px;width:180px;top:461.0px;color:#222;">机电安装</div>
<div class="cell" style="left:1025px;width:180px;top:461.0px;color:#222;">中标</div>
<div class="cell lnk" style="left:1205px;width:180px;top:461.0px;">胡广生</div>
<div class="cell lnk" style="left:1385px;width:180px;top:461.0px;">任晓燕</div>
<div class="cell" style="left:1565px;width:300px;top:461.0px;color:#222;text-align:left;padding-left:16px;">成都能源建设集团投资有限...</div>
<div class="abs" style="left:0;top:499.5px;width:1936px;height:55.5px;background:#faf9fa;border-bottom:1px solid #e4e4e4"></div>
<div class="cb" style="left:17px;top:517.0px"></div>
<div class="cell" style="left:53px;width:72px;top:516.5px;color:#222;">10</div>
<div class="cell" style="left:125px;width:120px;top:516.5px;color:#222;">108</div>
<div class="cell lnk" style="left:245px;width:225px;top:516.5px;">2020040003</div>
<div class="cell lnk" style="left:470px;width:375px;top:516.5px;text-align:left;padding-left:16px;">华软大厦研究基地中央空调系统工程</div>
<div class="cell" style="left:845px;width:180px;top:516.5px;color:#222;">空调安装</div>
<div class="cell" style="left:1025px;width:180px;top:516.5px;color:#222;">中标</div>
<div class="cell lnk" style="left:1205px;width:180px;top:516.5px;">林康平</div>
<div class="cell lnk" style="left:1385px;width:180px;top:516.5px;">黄小强</div>
<div class="cell" style="left:1565px;width:300px;top:516.5px;color:#222;text-align:left;padding-left:16px;">华软集团</div>
<div class="abs" style="left:0;top:555.0px;width:1936px;height:55.5px;background:#fefefe;border-bottom:1px solid #e4e4e4"></div>
<div class="cb" style="left:17px;top:572.5px"></div>
<div class="cell" style="left:53px;width:72px;top:572.0px;color:#222;">11</div>
<div class="cell" style="left:125px;width:120px;top:572.0px;color:#222;">107</div>
<div class="cell lnk" style="left:245px;width:225px;top:572.0px;">2020050001</div>
<div class="cell lnk" style="left:470px;width:375px;top:572.0px;text-align:left;padding-left:16px;">万达广场35#会所及咖啡厅空调安装...</div>
<div class="cell" style="left:845px;width:180px;top:572.0px;color:#222;">空调安装</div>
<div class="cell" style="left:1025px;width:180px;top:572.0px;color:#222;">中标</div>
<div class="cell lnk" style="left:1205px;width:180px;top:572.0px;">田静</div>
<div class="cell lnk" style="left:1385px;width:180px;top:572.0px;">董清平</div>
<div class="cell" style="left:1565px;width:300px;top:572.0px;color:#222;text-align:left;padding-left:16px;">万达集团</div>
<div class="abs" style="left:0;top:610.5px;width:1936px;height:55.5px;background:#faf9fa;border-bottom:1px solid #e4e4e4"></div>
<div class="cb" style="left:17px;top:628.0px"></div>
<div class="cell" style="left:53px;width:72px;top:627.5px;color:#222;">12</div>
<div class="cell" style="left:125px;width:120px;top:627.5px;color:#222;">106</div>
<div class="cell lnk" style="left:245px;width:225px;top:627.5px;">2021030002</div>
<div class="cell lnk" style="left:470px;width:375px;top:627.5px;text-align:left;padding-left:16px;">SM广场地下车库更换摄像机及硬盘项目</div>
<div class="cell" style="left:845px;width:180px;top:627.5px;color:#222;">安防</div>
<div class="cell" style="left:1025px;width:180px;top:627.5px;color:#222;">中标</div>
<div class="cell lnk" style="left:1205px;width:180px;top:627.5px;">张鑫</div>
<div class="cell lnk" style="left:1385px;width:180px;top:627.5px;">林康平</div>
<div class="cell" style="left:1565px;width:300px;top:627.5px;color:#222;text-align:left;padding-left:16px;">SM房地产开发有限公司</div>
<div class="abs" style="left:0;top:666.0px;width:1936px;height:55.5px;background:#fefefe;border-bottom:1px solid #e4e4e4"></div>
<div class="cb" style="left:17px;top:683.5px"></div>
<div class="cell" style="left:53px;width:72px;top:683.0px;color:#222;">13</div>
<div class="cell" style="left:125px;width:120px;top:683.0px;color:#222;">105</div>
<div class="cell lnk" style="left:245px;width:225px;top:683.0px;">2020030007</div>
<div class="cell lnk" style="left:470px;width:375px;top:683.0px;text-align:left;padding-left:16px;">广安邓小平纪念馆安全防范系统维护...</div>
<div class="cell" style="left:845px;width:180px;top:683.0px;color:#222;">安防</div>
<div class="cell" style="left:1025px;width:180px;top:683.0px;color:#222;">中标</div>
<div class="cell lnk" style="left:1205px;width:180px;top:683.0px;">张鑫</div>
<div class="cell lnk" style="left:1385px;width:180px;top:683.0px;">蔡江平</div>
<div class="cell" style="left:1565px;width:300px;top:683.0px;color:#222;text-align:left;padding-left:16px;">广安邓小平纪念文物管理局</div>
<div class="abs" style="left:53px;top:0;width:1px;height:714px;background:#e4e4e4"></div>
<div class="abs" style="left:125px;top:0;width:1px;height:714px;background:#e4e4e4"></div>
<div class="abs" style="left:245px;top:0;width:1px;height:714px;background:#e4e4e4"></div>
<div class="abs" style="left:470px;top:0;width:1px;height:714px;background:#e4e4e4"></div>
<div class="abs" style="left:845px;top:0;width:1px;height:714px;background:#e4e4e4"></div>
<div class="abs" style="left:1025px;top:0;width:1px;height:714px;background:#e4e4e4"></div>
<div class="abs" style="left:1205px;top:0;width:1px;height:714px;background:#e4e4e4"></div>
<div class="abs" style="left:1385px;top:0;width:1px;height:714px;background:#e4e4e4"></div>
<div class="abs" style="left:1565px;top:0;width:1px;height:714px;background:#e4e4e4"></div>
<div class="abs" style="left:1865px;top:0;width:1px;height:714px;background:#e4e4e4"></div>
</div>
<div class="abs" style="left:2541px;top:503px;width:17px;height:731px;background:#f1f1f1"></div>
<div class="abs" style="left:2559px;top:446px;width:1px;height:847px;background:#8fc0e8"></div>
<div class="abs" style="left:2550px;top:278px;width:10px;height:47px;overflow:hidden"><div class="abs" style="left:0;top:0;width:47px;height:47px;border-radius:50%;background:#d9f7fa"></div></div>
<div class="abs" style="left:2543px;top:520px;width:12px;height:168px;background:#c1c1c1"></div>
<div class="abs" style="left:2544px;top:509px;border-left:5px solid transparent;border-right:5px solid transparent;border-bottom:5px solid #a3a3a3"></div>
<div class="abs" style="left:605px;top:1217px;width:1936px;height:17px;background:#f1f1f1"></div>
<div class="abs" style="left:622px;top:1219px;width:1236px;height:13px;background:#c1c1c1"></div>
<div class="abs" style="left:610px;top:1221px;border-top:5px solid transparent;border-bottom:5px solid transparent;border-right:5px solid #a3a3a3"></div>
<div class="abs" style="left:2530px;top:1221px;border-top:5px solid transparent;border-bottom:5px solid transparent;border-left:5px solid #505050"></div>
<div class="abs" style="left:605px;top:1234px;width:1955px;height:1px;background:#8fc0e8"></div>
<div class="abs" style="left:304px;top:1292px;width:2256px;height:2px;background:#8fc0e8"></div>
<div class="abs" style="left:0;top:1294px;width:2560px;height:3px;background:#e5e9df"></div>
<svg class="abs" style="left:620px;top:1252px" width="24" height="24" viewBox="0 0 24 24"><path d="M11 3L4 12L11 21M18 3L11 12L18 21" fill="none" stroke="#8cc0ee" stroke-width="1.6"/></svg>
<svg class="abs" style="left:674px;top:1252px" width="18" height="24" viewBox="0 0 18 24"><path d="M13 3L5 12L13 21" fill="none" stroke="#8cc0ee" stroke-width="1.6"/></svg>
<svg class="abs" style="left:952px;top:1252px" width="18" height="24" viewBox="0 0 18 24"><path d="M5 3L13 12L5 21" fill="none" stroke="#3d8fdc" stroke-width="1.6"/></svg>
<svg class="abs" style="left:1003px;top:1252px" width="24" height="24" viewBox="0 0 24 24"><path d="M6 3L13 12L6 21M13 3L20 12L13 21" fill="none" stroke="#3d8fdc" stroke-width="1.6"/></svg>
<div class="abs" style="left:715px;top:1252px;width:1px;height:25px;background:#aaa"></div>
<div class="abs" style="left:931px;top:1252px;width:1px;height:25px;background:#aaa"></div>
<div class="abs" style="left:1047px;top:1252px;width:1px;height:25px;background:#aaa"></div>
<div class="abs" style="left:1237px;top:1252px;width:1px;height:25px;background:#aaa"></div>
<div class="t" style="left:728px;top:1254px;font-size:20px;color:#333">第</div>
<div class="abs" style="left:760px;top:1243px;width:48px;height:42px;border:1px solid #a6c9e8;border-radius:7px;background:#fff"></div>
<div class="t" style="left:778px;top:1254px;font-size:20px;color:#222">1</div>
<div class="t" style="left:819px;top:1254px;font-size:20px;color:#333">页，共 2 页</div>
<div class="t" style="left:1077px;top:1254px;font-size:20px;color:#333">每页:</div>
<div class="abs" style="left:1143px;top:1243px;width:81px;height:42px;border:1px solid #a6c9e8;border-radius:7px;background:#fff"></div>
<div class="t" style="left:1154px;top:1254px;font-size:20px;color:#222">50</div>
<div class="abs" style="left:1200px;top:1260px;border-left:7px solid transparent;border-right:7px solid transparent;border-top:8px solid #3c8fd8"></div>
<div class="t" style="left:2341px;top:1255px;font-size:20px;color:#333">显示 1 - 50 条，共 62 条</div>
<div class="abs" style="left:2551px;top:1200px;width:12px;height:52px;border-radius:3px;background:#4b5563;border:1px solid #2f3740"></div>
<div class="abs" style="left:2554px;top:1210px;width:6px;height:38px;background:repeating-linear-gradient(180deg,#e0c070 0 1px,transparent 1px 3px)"></div>
<div class="abs" style="left:2467px;top:1157px;width:63px;height:63px;border-radius:50%;background:#03aafc;box-shadow:0 4px 8px rgba(0,0,0,.28)"></div>
<svg class="abs" style="left:2477px;top:1168px" width="44" height="42" viewBox="0 0 44 42"><path d="M6 4H38Q41 4 41 7V28Q41 31 38 31H23.5L15 37V31H6Q3 31 3 28V7Q3 4 6 4Z" fill="none" stroke="#fff" stroke-width="3"/><circle cx="14" cy="17" r="2.3" fill="#fff"/><circle cx="22" cy="17" r="2.3" fill="#fff"/><circle cx="30" cy="17" r="2.3" fill="#fff"/></svg>
<div class="abs" style="left:2488px;top:1146px;width:43px;height:22px;border-radius:11px;background:#f50808;color:#fff;font-size:20px;line-height:22px;text-align:center">812</div>
</body></html>
